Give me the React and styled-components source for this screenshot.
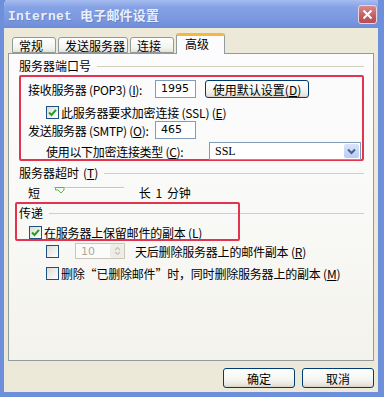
import React from 'react';
import styled, { createGlobalStyle } from 'styled-components';

const GlobalStyle = createGlobalStyle`
  html, body { margin: 0; padding: 0; background: #6d8fdc; }
  body { font-family: "Noto Sans CJK SC", "DejaVu Sans", sans-serif; font-size: 12px; color: #000; }
`;

const Window = styled.div`
  width: 384px;
  height: 397px;
  box-sizing: border-box;
  background: #ece9d8;
  border-left: 4px solid #6d8fdc;
  border-right: 6px solid #6d8fdc;
  border-bottom: 5px solid #6d8fdc;
  border-radius: 7px 7px 0 0;
  display: flex;
  flex-direction: column;
  overflow: hidden;
`;

const TitleBar = styled.div`
  height: 28px;
  margin: 0 -6px 0 -4px;
  padding: 0 7px 0 8px;
  background: linear-gradient(#a6bdf0, #86a2e6 25%, #7a98e0 70%, #6d8cd8);
  display: flex;
  align-items: center;
  justify-content: space-between;
`;

const Title = styled.span`
  font-family: "Liberation Mono", "Noto Sans CJK SC", monospace;
  font-weight: bold;
  font-size: 13px;
  color: #e9eefb;
  text-shadow: 1px 1px 0 #6a84c4;
  letter-spacing: 0.2px;
`;

const CloseButton = styled.div`
  width: 17px;
  height: 17px;
  border: 1px solid #e8d8dc;
  border-radius: 3px;
  background: linear-gradient(#d98a8c, #c55c62 60%, #b84c54);
  display: flex;
  align-items: center;
  justify-content: center;
`;

const Body = styled.div`
  flex: 1;
  padding: 5px 4px 0 4px;
  display: flex;
  flex-direction: column;
`;

const TabRow = styled.div`
  display: flex;
  align-items: flex-end;
  height: 20px;
  padding-left: 4px;
  gap: 2px;
  position: relative;
  z-index: 1;
`;

const Tab = styled.div`
  width: ${p => p.$w}px;
  height: ${p => (p.$active ? 21 : 16)}px;
  box-sizing: border-box;
  margin-bottom: ${p => (p.$active ? -1 : 0)}px;
  border: 1px solid #919b9c;
  border-bottom: ${p => (p.$active ? 'none' : '1px solid #919b9c')};
  border-top: ${p => (p.$active ? '3px solid #f4b840' : '1px solid #919b9c')};
  border-radius: 3px 3px 0 0;
  background: ${p => (p.$active ? '#fcfcfe' : 'linear-gradient(#ffffff, #f3f3ef 70%, #e3e1d8)')};
  display: flex;
  align-items: ${p => (p.$active ? 'flex-start' : 'center')};
  padding: ${p => (p.$active ? '0 0 0 8px' : '0 0 0 6px')};
  line-height: 15px;
  font-size: 12px;
`;

const Panel = styled.div`
  position: relative;
  height: 308px;
  box-sizing: border-box;
  border: 1px solid #919b9c;
  background: linear-gradient(#fcfcfe, #f8f8f5 60%, #f3f2ec);
  padding: 5px 9px 0 10px;
  display: flex;
  flex-direction: column;
`;

const GroupHeader = styled.div`
  display: flex;
  align-items: center;
  height: 14px;
  line-height: 14px;
  margin-top: ${p => p.$mt || 0}px;
  gap: 4px;
  white-space: nowrap;
  &::after {
    content: '';
    flex: 1;
    height: 1px;
    background: #d0d0bf;
    margin-left: 2px;
  }
`;

const Highlight = styled.div`
  border: 2px solid #e3344f;
  border-radius: 2px;
  margin-top: 2px;
  padding: 1px 0 0 7px;
  height: 86px;
  box-sizing: border-box;
  display: flex;
  flex-direction: column;
`;

const Overlay = styled.div`
  position: absolute;
  left: 6px;
  top: 148px;
  width: 225px;
  height: 39px;
  box-sizing: border-box;
  border: 2px solid #e3344f;
  border-radius: 2px;
  pointer-events: none;
`;

const Row = styled.div`
  display: flex;
  align-items: center;
  height: ${p => p.$h || 16}px;
  margin-top: ${p => p.$mt || 0}px;
  padding-left: ${p => p.$pl || 0}px;
  white-space: nowrap;
`;

const Label = styled.span`
  width: ${p => p.$w}px;
  flex-shrink: 0;
  font-size: 12px;
  letter-spacing: -0.3px;
  color: ${p => (p.$disabled ? '#aca899' : '#000')};
`;

const Text = styled.span`
  font-size: 12px;
  letter-spacing: -0.2px;
  margin-left: ${p => p.$ml || 0}px;
  color: ${p => (p.$disabled ? '#aca899' : '#000')};
`;

const TextInput = styled.div`
  width: 41px;
  height: 18px;
  box-sizing: border-box;
  border: 1px solid #7f9db9;
  background: #fff;
  padding: 0 5px;
  line-height: 16px;
  font-family: "DejaVu Sans", sans-serif;
  font-size: 11px;
`;

const Button = styled.div`
  width: ${p => p.$w}px;
  height: ${p => p.$h || 18}px;
  box-sizing: border-box;
  margin-left: ${p => p.$ml || 0}px;
  border: 1px solid #003c74;
  border-radius: 3px;
  background: linear-gradient(#ffffff, #f4f4f0 60%, #e6e3da 90%, #d6d0c5);
  display: flex;
  align-items: center;
  justify-content: center;
  font-size: 12px;
`;

const Select = styled.div`
  width: 152px;
  height: 18px;
  box-sizing: border-box;
  margin-left: auto;
  margin-right: 1px;
  border: 1px solid #7f9db9;
  background: #fff;
  display: flex;
  align-items: center;
  justify-content: space-between;
  padding: 0 1px 0 5px;
  font-family: "Liberation Serif", serif;
  font-size: 12px;
`;

const DropButton = styled.div`
  width: 15px;
  height: 14px;
  border-radius: 2px;
  background: linear-gradient(#d8e4fc, #b8cdf6);
  display: flex;
  align-items: center;
  justify-content: center;
`;

const Box = styled.div`
  width: 13px;
  height: 13px;
  box-sizing: border-box;
  flex-shrink: 0;
  border: 1px solid ${p => (p.$disabled ? '#b5b4ac' : '#1c5180')};
  background: ${p => (p.$disabled ? '#f4f4f0' : 'linear-gradient(135deg, #dcdcd6, #fff)')};
  display: flex;
  align-items: center;
  justify-content: center;
`;

const Slider = styled.div`
  position: relative;
  width: 70px;
  height: 14px;
  margin-left: 14px;
  &::before {
    content: '';
    position: absolute;
    left: 0;
    right: 0;
    top: 2px;
    height: 1px;
    background: #c8c6ba;
    border-bottom: 1px solid #fff;
  }
`;

const Thumb = styled.svg`
  position: absolute;
  left: 1px;
  top: 2px;
`;

const Spinner = styled.div`
  width: 50px;
  height: 16px;
  box-sizing: border-box;
  margin-left: 16px;
  border: 1px solid #c9c7ba;
  background: #fbfbf9;
  display: flex;
  align-items: center;
  justify-content: space-between;
  padding-left: 5px;
  font-family: "DejaVu Sans", sans-serif;
  font-size: 11px;
  color: #aca899;
`;

const SpinButtons = styled.div`
  width: 14px;
  height: 14px;
  background: #eeede5;
  border-radius: 2px;
  display: flex;
  align-items: center;
  justify-content: center;
`;

const Footer = styled.div`
  display: flex;
  justify-content: flex-end;
  gap: 7px;
  margin-top: 7px;
`;

const Check = ({ checked, disabled }) => (
  <Box $disabled={disabled}>
    {checked && (
      <svg width="11" height="11" viewBox="0 0 11 11">
        <path d="M2 5.5 L4.5 8 L9 2.8" fill="none" stroke="#21a121" strokeWidth="2" />
      </svg>
    )}
  </Box>
);

const Key = ({ k }) => (
  <span>(<u>{k}</u>)</span>
);

export default function App() {
  return (
    <>
      <GlobalStyle />
      <Window>
        <TitleBar>
          <Title>Internet 电子邮件设置</Title>
          <CloseButton>
            <svg width="11" height="11" viewBox="0 0 11 11">
              <path d="M1.5 1.5 L9.5 9.5 M9.5 1.5 L1.5 9.5" stroke="#fff" strokeWidth="2" />
            </svg>
          </CloseButton>
        </TitleBar>
        <Body>
          <TabRow>
            <Tab $w={44}>常规</Tab>
            <Tab $w={70}>发送服务器</Tab>
            <Tab $w={44}>连接</Tab>
            <Tab $w={49} $active>高级</Tab>
          </TabRow>
          <Panel>
            <GroupHeader>服务器端口号</GroupHeader>
            <Highlight>
              <Row $h={18} $mt={2}>
                <Label $w={127}>接收服务器 (POP3) <Key k="I" />:</Label>
                <TextInput>1995</TextInput>
                <Button $w={104} $ml={9}>使用默认设置 <Key k="D" /></Button>
              </Row>
              <Row $mt={6} $pl={18}>
                <Check checked />
                <Text $ml={2}>此服务器要求加密连接 (SSL) <Key k="E" /></Text>
              </Row>
              <Row $h={18} $mt={1}>
                <Label $w={127}>发送服务器 (SMTP) <Key k="O" />:</Label>
                <TextInput>465</TextInput>
              </Row>
              <Row $h={18} $mt={3} $pl={18}>
                <Label $w={140}>使用以下加密连接类型 <Key k="C" />:</Label>
                <Select>
                  SSL
                  <DropButton>
                    <svg width="9" height="7" viewBox="0 0 9 7">
                      <path d="M1 1.5 L4.5 5 L8 1.5" fill="none" stroke="#4d6185" strokeWidth="2" />
                    </svg>
                  </DropButton>
                </Select>
              </Row>
            </Highlight>
            <GroupHeader $mt={5}>服务器超时 <Key k="T" /></GroupHeader>
            <Row $mt={4} $pl={9}>
              <Text>短</Text>
              <Slider>
                <Thumb width="10" height="7" viewBox="0 0 10 7">
                  <path d="M0.5 0.5 H9 V3 L6 6 L3 3 H0.5 Z" fill="#f4fbf2" stroke="#5fb45a" strokeWidth="1" />
                </Thumb>
              </Slider>
              <Text $ml={15}>长&nbsp;&nbsp;1&nbsp;&nbsp;分钟</Text>
            </Row>
            <GroupHeader $mt={6}>传递</GroupHeader>
            <Row $mt={4} $pl={10}>
              <Check checked />
              <Text $ml={2}>在服务器上保留邮件的副本 <Key k="L" /></Text>
            </Row>
            <Row $mt={3} $pl={27}>
              <Check />
              <Spinner>
                10
                <SpinButtons>
                  <svg width="7" height="10" viewBox="0 0 7 10">
                    <path d="M1 4 L3.5 1.5 L6 4 M1 6 L3.5 8.5 L6 6" fill="none" stroke="#c4c2b6" strokeWidth="1.2" />
                  </svg>
                </SpinButtons>
              </Spinner>
              <Text $ml={10}>天后删除服务器上的邮件副本 <Key k="R" /></Text>
            </Row>
            <Row $mt={6} $pl={27}>
              <Check />
              <Text $ml={2}>删除“已删除邮件”时，同时删除服务器上的副本 <Key k="M" /></Text>
            </Row>
            <Overlay />
          </Panel>
          <Footer>
            <Button $w={72} $h={20}>确定</Button>
            <Button $w={72} $h={20}>取消</Button>
          </Footer>
        </Body>
      </Window>
    </>
  );
}
